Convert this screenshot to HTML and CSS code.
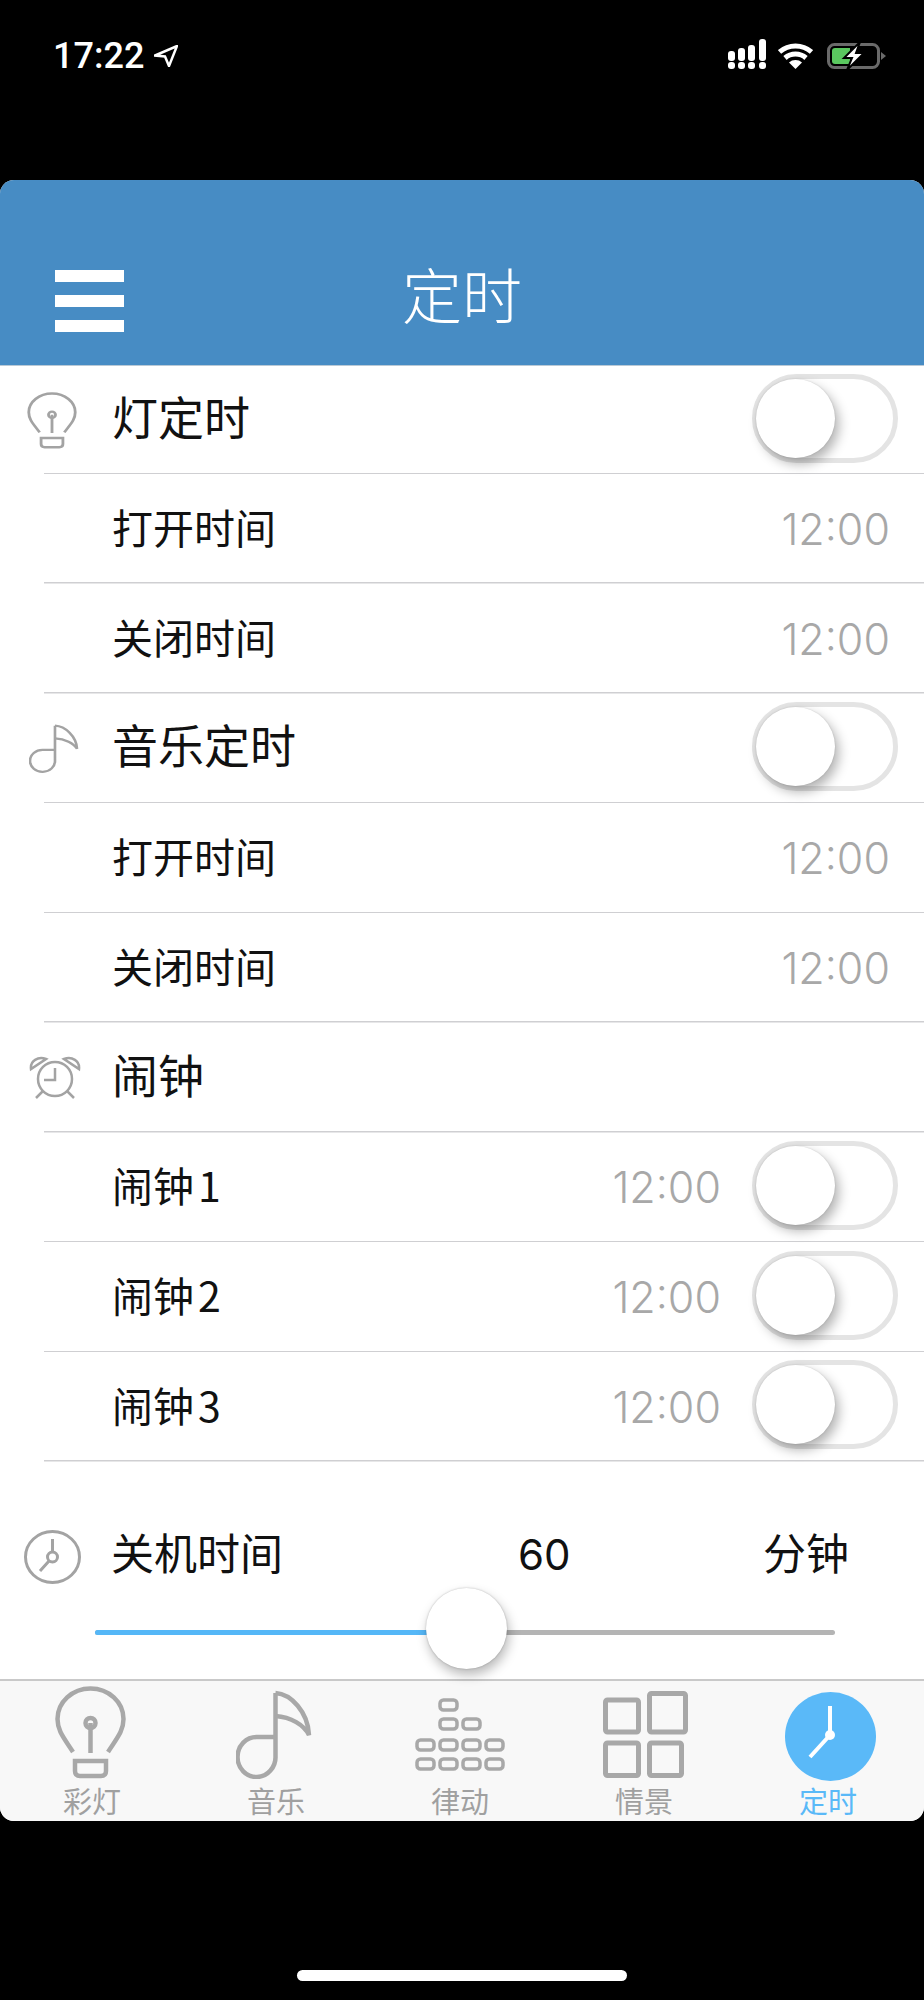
FILE: index.html
```html
<!DOCTYPE html>
<html lang="zh-CN">
<head>
  <meta charset="utf-8">
  <title>定时</title>
  <link rel="stylesheet" href="styles.css">
</head>
<body>
  <svg class="icon-defs" width="0" height="0">
    <symbol id="bulb" viewBox="0 0 71 93" preserveAspectRatio="none">
      <path d="M18 66C9 52 2.500 45 2.500 33A33 30.500 0 0 1 68.500 33C68.500 45 62 52 53 66M35.500 37V67M20 75H51V85Q51 90 46 90H25Q20 90 20 85Z"/>
      <circle class="solid" cx="35.500" cy="37" r="5"/>
    </symbol>
    <symbol id="note" viewBox="0 0 76 89" preserveAspectRatio="none">
      <path d="M39.500 3V66A19 20 0 1 1 21 47H39.500"/>
      <path d="M39.500 3C55 4 72 22 73 45C68 35 55 27 39.500 26"/>
    </symbol>
    <symbol id="alarm" viewBox="0 0 52 43" preserveAspectRatio="none">
      <circle cx="26" cy="23" r="17"/>
      <path d="M2 13C1 5 9 0 17 3ZM50 13C51 5 43 0 35 3ZM14 35L7 42M38 35L45 42M26 12V24H15"/>
    </symbol>
    <symbol id="dial" viewBox="0 0 57 54" preserveAspectRatio="none">
      <ellipse cx="28.500" cy="27" rx="27" ry="25.500"/>
      <circle cx="28.500" cy="27" r="5"/>
      <path d="M28.500 22V9M25 31L16 41"/>
    </symbol>
  </svg>

  <div class="status-bar">
    <div class="status-time">
      <span>17:22</span>
      <svg class="status-arrow" viewBox="0 0 24 22"><path d="M23 1L1 10.500L11 11.500L15 21Z"/></svg>
    </div>
    <div class="status-icons">
      <svg class="status-signal" width="38" height="30" viewBox="0 0 38 30">
        <rect x="0" y="12" width="7" height="10" rx="3"/><rect x="10" y="9" width="7" height="13" rx="3"/><rect x="20" y="6" width="7" height="16" rx="3"/><rect x="31" y="0" width="7" height="22" rx="3"/>
        <rect x="0" y="23" width="7" height="7" rx="3"/><rect x="10" y="23" width="7" height="7" rx="3"/><rect x="20" y="23" width="7" height="7" rx="3"/><rect x="31" y="23" width="7" height="7" rx="3"/>
      </svg>
      <svg class="status-wifi" width="35" height="26" viewBox="0 0 35 26">
        <path d="M1.500 9A24 24 0 0 1 33.500 9M7 15A16 16 0 0 1 28 15" fill="none" stroke="#fff" stroke-width="5"/>
        <path d="M17.500 26L11 19.500A10 10 0 0 1 24 19.500Z" fill="#fff"/>
      </svg>
      <svg class="status-battery" width="59" height="26" viewBox="0 0 59 26">
        <rect x="1.500" y="1.500" width="50" height="23" rx="6" fill="none" stroke="#6a6a6a" stroke-width="3"/>
        <path d="M5 8Q5 5 8 5H23V21H8Q5 21 5 18Z" fill="#5ac85f"/>
        <path d="M54 9L59 13L54 17Z" fill="#6a6a6a"/>
        <path d="M33 -1L17 15H25L20 27L37 10H29Z" fill="#fff" stroke="#000" stroke-width="2"/>
      </svg>
    </div>
  </div>

  <div class="app">
    <div class="app-header">
      <div class="menu-btn"><span></span><span></span><span></span></div>
      <div class="app-title">定时</div>
    </div>

    <div class="list">
      <div class="row row-head">
        <svg class="row-icon icon-bulb"><use href="#bulb"/></svg>
        <div class="row-label">灯定时</div>
        <div class="switch"></div>
      </div>
      <div class="row">
        <div class="row-label">打开时间</div>
        <div class="row-time">12:00</div>
      </div>
      <div class="row">
        <div class="row-label">关闭时间</div>
        <div class="row-time">12:00</div>
      </div>

      <div class="row row-head">
        <svg class="row-icon icon-note"><use href="#note"/></svg>
        <div class="row-label">音乐定时</div>
        <div class="switch"></div>
      </div>
      <div class="row">
        <div class="row-label">打开时间</div>
        <div class="row-time">12:00</div>
      </div>
      <div class="row">
        <div class="row-label">关闭时间</div>
        <div class="row-time">12:00</div>
      </div>

      <div class="row row-head">
        <svg class="row-icon icon-alarm"><use href="#alarm"/></svg>
        <div class="row-label">闹钟</div>
      </div>
      <div class="row">
        <div class="row-label">闹钟<span class="row-num">1</span></div>
        <div class="row-time row-time-switch">12:00</div>
        <div class="switch"></div>
      </div>
      <div class="row">
        <div class="row-label">闹钟<span class="row-num">2</span></div>
        <div class="row-time row-time-switch">12:00</div>
        <div class="switch"></div>
      </div>
      <div class="row">
        <div class="row-label">闹钟<span class="row-num">3</span></div>
        <div class="row-time row-time-switch">12:00</div>
        <div class="switch"></div>
      </div>
    </div>

    <div class="off-timer">
      <div class="off-row">
        <svg class="row-icon icon-dial"><use href="#dial"/></svg>
        <div class="off-label">关机时间</div>
        <div class="off-value">60</div>
        <div class="off-unit">分钟</div>
      </div>
      <div class="slider">
        <div class="slider-fill"></div>
        <div class="slider-thumb"></div>
      </div>
    </div>

    <div class="tabbar">
      <div class="tab">
        <svg class="tab-icon tab-bulb"><use href="#bulb"/></svg>
        <div class="tab-label">彩灯</div>
      </div>
      <div class="tab">
        <svg class="tab-icon tab-note"><use href="#note"/></svg>
        <div class="tab-label">音乐</div>
      </div>
      <div class="tab">
        <svg class="tab-icon tab-rhythm" viewBox="0 0 90 75">
          <rect x="25" y="2" width="17" height="10" rx="3.500"/>
          <rect x="25" y="21" width="17" height="10" rx="3.500"/><rect x="48" y="21" width="17" height="10" rx="3.500"/>
          <rect x="2" y="42" width="17" height="10" rx="3.500"/><rect x="25" y="42" width="17" height="10" rx="3.500"/><rect x="48" y="42" width="17" height="10" rx="3.500"/><rect x="71" y="42" width="17" height="10" rx="3.500"/>
          <rect x="2" y="61" width="17" height="10" rx="3.500"/><rect x="25" y="61" width="17" height="10" rx="3.500"/><rect x="48" y="61" width="17" height="10" rx="3.500"/><rect x="71" y="61" width="17" height="10" rx="3.500"/>
        </svg>
        <div class="tab-label">律动</div>
      </div>
      <div class="tab">
        <svg class="tab-icon tab-scene" viewBox="0 0 85 87">
          <rect x="2.500" y="9" width="33" height="32" rx="2"/>
          <rect x="46.500" y="2.500" width="36" height="38.500" rx="2"/>
          <rect x="2.500" y="52" width="33" height="32.500" rx="2"/>
          <rect x="46.500" y="52" width="32" height="32.500" rx="2"/>
        </svg>
        <div class="tab-label">情景</div>
      </div>
      <div class="tab tab-active">
        <svg class="tab-icon tab-clock" viewBox="0 0 91 89">
          <ellipse cx="45.500" cy="44.500" rx="45.500" ry="44.500"/>
          <path d="M45 14V43L25 65"/>
          <circle cx="45" cy="43" r="5"/>
        </svg>
        <div class="tab-label">定时</div>
      </div>
    </div>
  </div>

  <div class="home-bar"><span></span></div>
</body>
</html>
```

FILE: styles.css
```css
* {
  margin: 0;
  padding: 0;
  box-sizing: border-box;
}

body {
  width: 924px;
  height: 2000px;
  background: #000;
  font-family: "Noto Sans CJK SC", "Noto Sans", sans-serif;
  font-weight: 400;
  color: #111;
  overflow: hidden;
}

.icon-defs {
  display: block;
  height: 0;
}

/* Phone status bar */
.status-bar {
  height: 180px;
  padding: 38px 38px 0 53px;
  display: flex;
  justify-content: space-between;
  align-items: flex-start;
  color: #fff;
}

.status-time {
  display: flex;
  align-items: center;
  gap: 10px;
  font-family: Roboto, sans-serif;
  font-size: 36px;
  line-height: 36px;
  font-weight: 500;
}

.status-arrow {
  width: 24px;
  height: 22px;
  fill: none;
  stroke: #fff;
  stroke-width: 2.5;
}

.status-icons {
  display: flex;
  align-items: flex-start;
  gap: 12px;
  padding-top: 1px;
}

.status-signal {
  fill: #fff;
}

.status-wifi,
.status-battery {
  margin-top: 4px;
}

.status-battery {
  margin-left: 2px;
}

/* App window */
.app {
  height: 1641px;
  background: #fff;
  border-radius: 14px;
  overflow: hidden;
  display: flex;
  flex-direction: column;
}

.app-header {
  height: 186px;
  flex: none;
  background: #478cc4;
  position: relative;
  border-bottom: 1px solid #b9c9d6;
  display: flex;
  justify-content: center;
  padding-top: 71px;
}

.menu-btn {
  position: absolute;
  left: 55px;
  top: 90px;
  width: 69px;
  display: flex;
  flex-direction: column;
  gap: 13.500px;
}

.menu-btn span {
  display: block;
  height: 11.500px;
  background: #fff;
}

.app-title {
  font-size: 60px;
  font-weight: 300;
  line-height: 84px;
  color: #fff;
}

/* Timer rows */
.row {
  height: 109.750px;
  padding-left: 112px;
  padding-right: 34px;
  display: flex;
  align-items: center;
  background: linear-gradient(#cfcfd2, #cfcfd2) no-repeat 44px 100% / 100% 1.500px;
}

.row:first-child {
  height: 108px;
}

.row-head {
  padding-left: 27px;
}

.row-icon {
  flex: none;
  fill: none;
  stroke: #a3a3a3;
  stroke-width: 4;
  overflow: visible;
}

.row-icon .solid {
  fill: #a3a3a3;
}

.icon-bulb {
  width: 50px;
  height: 57px;
  margin-right: 35px;
}

.icon-note {
  width: 50px;
  height: 49px;
  margin: 0 33px 0 2px;
}

.icon-alarm {
  width: 52px;
  height: 43px;
  margin: 0 31px 0 2px;
  stroke-width: 2.500;
}

.row-label {
  flex: 1;
  font-size: 41px;
  line-height: 60px;
  padding-bottom: 6px;
}

.row-head .row-label {
  font-size: 46px;
  line-height: 68px;
  padding-bottom: 10px;
}

.row-num {
  margin-left: 4px;
}

.row-time {
  font-family: Inter, sans-serif;
  font-size: 43px;
  font-weight: 300;
  color: #a8a8a8;
}

.row-time-switch {
  margin-right: 31px;
}

/* Off state switch */
.switch {
  width: 146px;
  height: 89px;
  flex: none;
  margin-right: -8px;
  border: 5px solid #e4e4e4;
  border-radius: 45px;
  position: relative;
  top: -2px;
}

.switch::after {
  content: "";
  position: absolute;
  left: -1px;
  top: 0;
  width: 79px;
  height: 79px;
  border-radius: 50%;
  background: #fff;
  box-shadow: 4px 6px 12px rgba(0, 0, 0, 0.3), 0 0 2px rgba(0, 0, 0, 0.15);
}

/* Power off timer */
.off-timer {
  flex: 1;
  padding-top: 65px;
}

.off-row {
  height: 56px;
  padding-left: 24px;
  display: flex;
  align-items: center;
}

.icon-dial {
  width: 57px;
  height: 54px;
  margin-top: 4px;
  margin-right: 30px;
  stroke-width: 3;
}

.off-label {
  width: 407px;
  font-size: 43px;
  line-height: 64px;
  padding-bottom: 8px;
}

.off-value {
  width: 245px;
  font-family: Inter, sans-serif;
  font-size: 42px;
}

.off-unit {
  font-size: 43px;
  line-height: 64px;
  padding-bottom: 8px;
}

.slider {
  height: 5px;
  margin: 47px 89px 0 95px;
  background: #b4b4b4;
  border-radius: 3px;
  position: relative;
}

.slider-fill {
  width: 340px;
  height: 100%;
  background: #55b7f7;
  border-radius: 3px 0 0 3px;
}

.slider-thumb {
  position: absolute;
  left: 331px;
  top: -42px;
  width: 81px;
  height: 81px;
  border-radius: 50%;
  background: #fff;
  box-shadow: 2px 6px 12px rgba(0, 0, 0, 0.28), 0 0 2px rgba(0, 0, 0, 0.25);
}

/* Bottom tabs */
.tabbar {
  height: 142px;
  flex: none;
  background: #f8f8f8;
  border-top: 2px solid #c9c9c9;
  padding-right: 4px;
  display: grid;
  grid-template-columns: repeat(5, 1fr);
}

.tab {
  position: relative;
  display: flex;
  justify-content: center;
}

.tab-icon {
  position: absolute;
  fill: none;
  stroke: #a8a8a8;
  stroke-width: 4.500;
  filter: blur(0.6px);
  overflow: visible;
}

.tab-icon .solid {
  fill: #a8a8a8;
}

.tab-bulb {
  left: 55px;
  top: 5px;
  width: 71px;
  height: 93px;
}

.tab-note {
  left: 52px;
  top: 9px;
  width: 76px;
  height: 89px;
}

.tab-rhythm {
  left: 47px;
  top: 17px;
  width: 90px;
  height: 75px;
  stroke-width: 3.500;
}

.tab-scene {
  left: 51px;
  top: 10px;
  width: 85px;
  height: 87px;
  stroke-width: 5;
}

.tab-clock {
  left: 49px;
  top: 11px;
  width: 91px;
  height: 89px;
  fill: #5ab9f8;
  stroke: none;
}

.tab-clock path {
  fill: none;
  stroke: #fff;
  stroke-width: 4;
}

.tab-clock circle {
  fill: #fff;
}

.tab-label {
  align-self: flex-end;
  font-size: 29px;
  line-height: 42px;
  font-weight: 400;
  color: #a0a0a0;
}

.tab-active .tab-label {
  color: #5ab9f8;
}

/* Home indicator */
.home-bar {
  padding-top: 149px;
  display: flex;
  justify-content: center;
}

.home-bar span {
  width: 330px;
  height: 11px;
  border-radius: 6px;
  background: #fff;
}
```
